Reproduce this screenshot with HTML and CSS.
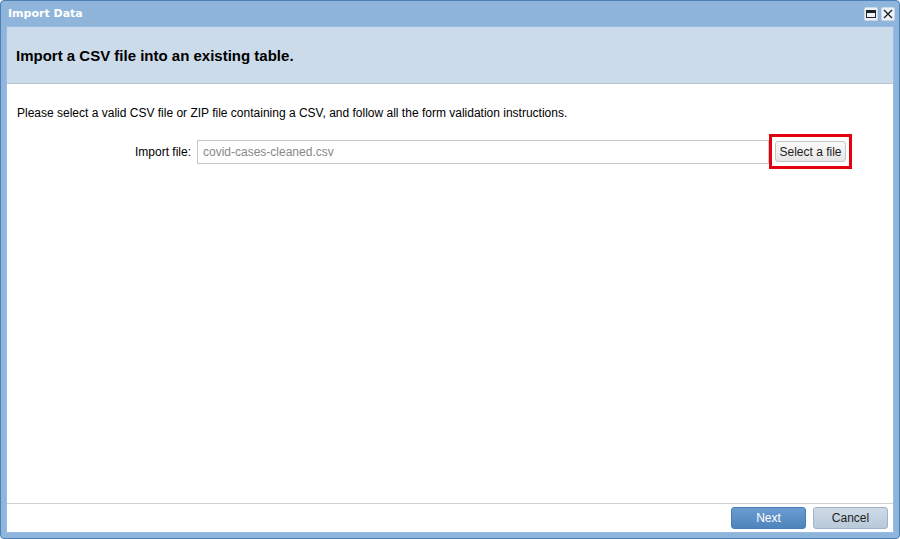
FILE: index.html
```html
<!DOCTYPE html>
<html>
<head>
<meta charset="utf-8">
<link rel="stylesheet" href="styles.css">
</head>
<body>
<div class="window">
  <div class="titlebar">
    <span class="title">Import Data</span>
    <div class="tools">
      <span class="tool">
        <svg width="12" height="12" viewBox="0 0 12 12"><rect x="1.5" y="2.5" width="9" height="7" fill="none" stroke="#222" stroke-width="1"/><rect x="2" y="3" width="8" height="2" fill="#222"/></svg>
      </span>
      <span class="tool">
        <svg width="12" height="12" viewBox="0 0 12 12"><path d="M2 2 L10 10 M10 2 L2 10" stroke="#222" stroke-width="1.4"/></svg>
      </span>
    </div>
  </div>
  <div class="panel">
    <div class="header">Import a CSV file into an existing table.</div>
    <div class="body">
      <p class="intro">Please select a valid CSV file or ZIP file containing a CSV, and follow all the form validation instructions.</p>
      <div class="field">
        <label class="label">Import file:</label>
        <div class="input">covid-cases-cleaned.csv</div>
        <div class="highlight"><button class="select-btn">Select a file</button></div>
      </div>
    </div>
    <div class="footer">
      <button class="btn btn-next">Next</button>
      <button class="btn btn-cancel">Cancel</button>
    </div>
  </div>
</div>
</body>
</html>
```
FILE: styles.css
```css
html, body { margin: 0; padding: 0; }
body { width: 900px; height: 539px; font-family: "Liberation Sans", Arial, sans-serif; font-size: 12px; }
.window {
  box-sizing: border-box;
  width: 900px; height: 539px;
  background: #8fb5db;
  border: 1px solid #4d80b8;
  border-radius: 4px;
  padding: 0 5px 5px 5px;
  display: flex; flex-direction: column;
}
.titlebar {
  height: 25px;
  display: flex; align-items: center; justify-content: space-between;
  padding-left: 2px;
}
.title { color: #fff; font-weight: bold; font-size: 11px; font-family: "DejaVu Sans", sans-serif; }
.tools { display: flex; gap: 3px; margin-right: -1px; }
.tool { width: 14px; height: 14px; background: #eef3f9; border-radius: 2px; display: flex; align-items: center; justify-content: center; border: 1px solid #c9d8e8; box-sizing: border-box; }
.panel {
  flex: 1;
  background: #fff;
  border: 1px solid #99bbe8;
  display: flex; flex-direction: column;
}
.header {
  height: 57px; box-sizing: border-box;
  background: #cbdbe9;
  border-bottom: 1px solid #b6c8d8;
  padding: 20px 0 0 9px;
  font-weight: bold; font-size: 15px;
  color: #000;
}
.body { flex: 1; padding: 0 10px; border-bottom: 1px solid #d0d0d0; }
.intro { margin: 22px 0 0 0; color: #000; font-size: 12px; }
.field { display: flex; align-items: center; margin-top: 14px; }
.label { width: 180px; text-align: right; padding-right: 6px; box-sizing: border-box; color: #000; }
.input {
  width: 572px; height: 24px; box-sizing: border-box;
  border: 1px solid #c8c8c8; color: #888; padding: 4px 5px;
}
.highlight { border: 3px solid #e3000f; padding: 4px 3px; display: flex; }
.select-btn {
  font: inherit; font-size: 12px; color: #222;
  height: 21px; width: 71px; padding: 0;
  border: 1px solid #c4c4c4; border-radius: 3px;
  background: linear-gradient(#fafafa, #e6e6e6);
}
.footer { height: 28px; box-sizing: border-box; display: flex; justify-content: flex-end; align-items: center; gap: 7px; padding-right: 5px; }
.btn { font: inherit; font-size: 12px; width: 75px; height: 22px; border-radius: 3px; }
.btn-next { color: #fff; background: linear-gradient(#6a9dd0, #4e84bc); border: 1px solid #4a7db3; }
.btn-cancel { color: #222; background: linear-gradient(#cfdbe7, #b8c9d9); border: 1px solid #9fb3c8; }
```
